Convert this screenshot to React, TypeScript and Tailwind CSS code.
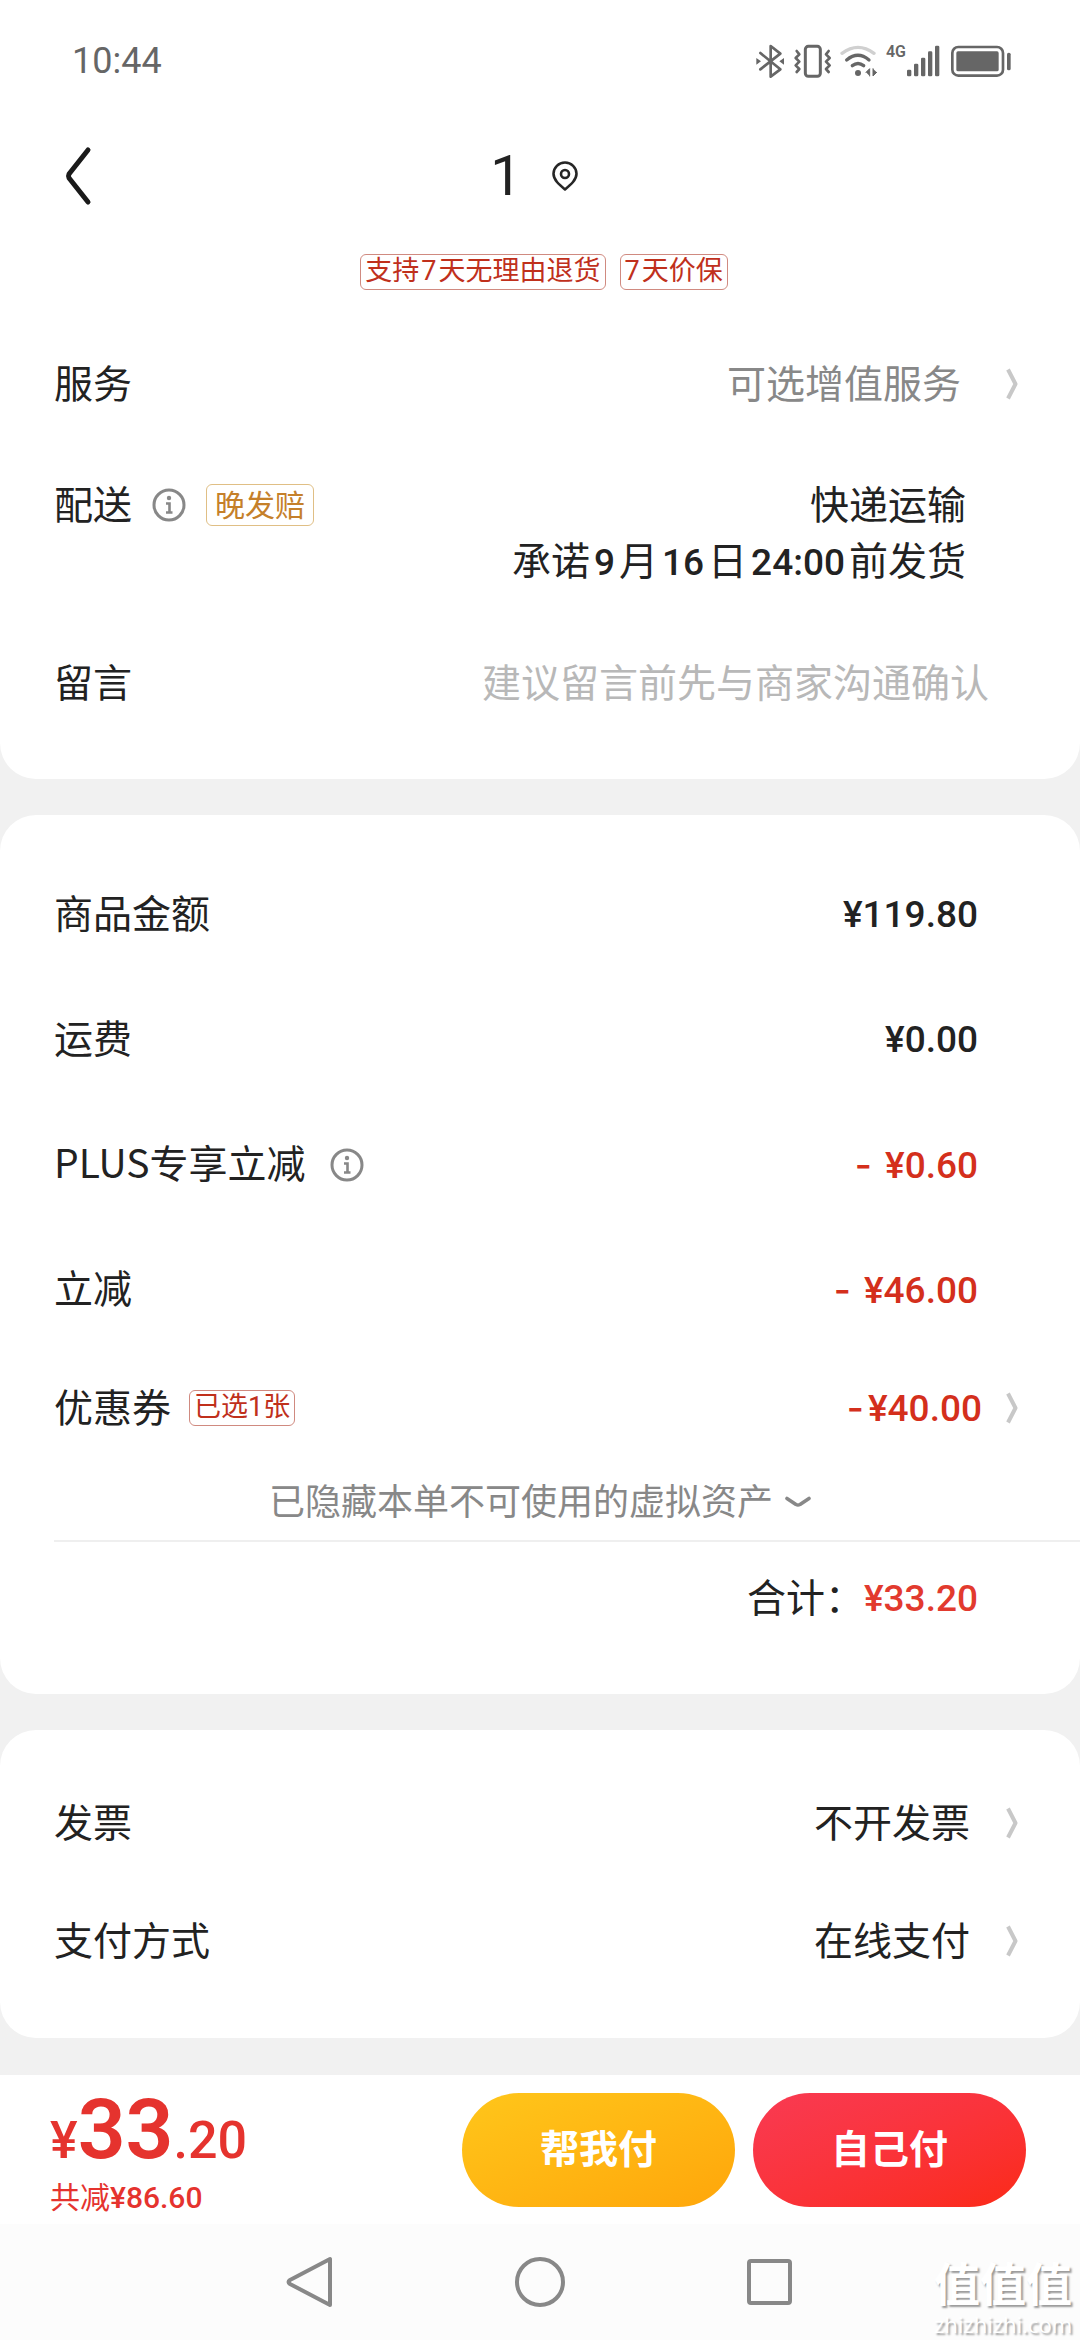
import type { ReactNode } from 'react';

const charges = [
  { label: '商品金额', amount: '¥119.80' },
  { label: '运费', amount: '¥0.00' },
  { label: 'PLUS专享立减', amount: '¥0.60', discount: true, info: true },
  { label: '立减', amount: '¥46.00', discount: true },
];

const settings = [
  { label: '发票', value: '不开发票' },
  { label: '支付方式', value: '在线支付' },
];

function Chevron() {
  return (
    <svg viewBox="0 0 12 32" className="w-3 h-8 shrink-0" fill="none" stroke="#c8c8c8" strokeWidth="4" aria-hidden="true">
      <path d="M2 1.5 L9.5 16 L2 30.5" strokeLinejoin="round" />
    </svg>
  );
}

function InfoIcon() {
  return (
    <svg viewBox="0 0 34 34" className="w-[34px] h-[34px]" fill="none" stroke="#888" aria-hidden="true">
      <circle cx="17" cy="17" r="15" strokeWidth="3" />
      <circle cx="17" cy="10" r="2.2" fill="#888" stroke="none" />
      <path d="M14 15.5 H17.5 V24.5 M14 24.5 H20.5" strokeWidth="2.6" />
    </svg>
  );
}

function Tag({ children }: { children: ReactNode }) {
  return (
    <span className="h-9 px-1 pb-1 flex items-center rounded-md border border-[#d08a80] text-[#c0301c] text-[27px] leading-none">
      <span>{children}</span>
    </span>
  );
}

function Num({ children }: { children: ReactNode }) {
  return <span className="font-[Roboto] font-medium text-[37px] mx-1">{children}</span>;
}

function Minus() {
  return <span className="font-[Inter] mr-1">-</span>;
}

function StatusBar() {
  return (
    <div className="h-[122px] pl-[72px] pr-[68px] flex items-center justify-between text-[#666]">
      <span className="font-[Roboto] text-4xl leading-none">10:44</span>
      <div className="flex items-center">
        <svg viewBox="105 72 90 105" className="w-[30px] h-[35px] mr-2" fill="none" stroke="currentColor" strokeWidth="8" strokeLinejoin="round" strokeLinecap="round">
          <path d="M121 99 L181 148 L152 170 V78 L181 101 L121 148" />
          <path d="M109 114 L123 124 L109 134 Z M192 114 L178 124 L192 134 Z" fill="currentColor" stroke="none" />
        </svg>
        <svg viewBox="220 72 117 105" className="w-[39px] h-[35px] mr-2" fill="none" stroke="currentColor" strokeWidth="8" strokeLinejoin="round" strokeLinecap="round">
          <rect x="257" y="79" width="45" height="90" rx="9" strokeWidth="9" />
          <path d="M231 93 L239 103 L228 114 L239 125 L228 136 L239 147 L231 156" />
          <path d="M327 93 L319 103 L330 114 L319 125 L330 136 L319 147 L327 156" />
        </svg>
        <svg viewBox="366 72 114 105" className="w-[38px] h-[35px] mr-2" fill="none" stroke="currentColor" strokeWidth="10" strokeLinecap="round">
          <path d="M372 100 Q420 64 468 100" stroke="#d0d0d0" />
          <path d="M386 120 Q420 92 453 120" />
          <path d="M403 137 Q420 124 437 137" />
          <circle cx="420" cy="159" r="9" fill="currentColor" stroke="none" />
          <path d="M444 157 L455 146 V168 M465 146 V168 L476 157" fill="currentColor" strokeWidth="3" />
        </svg>
        <span className="font-[Roboto] font-semibold text-base leading-none self-start">4G</span>
        <svg viewBox="552 72 102 105" className="w-[34px] h-[35px] mr-2.5" fill="currentColor">
          <rect x="555" y="149" width="13" height="20" rx="4" />
          <rect x="576" y="131" width="13" height="38" rx="4" />
          <rect x="597" y="113" width="13" height="56" rx="4" />
          <rect x="618" y="94" width="13" height="75" rx="4" />
          <rect x="639" y="77" width="13" height="92" rx="4" />
        </svg>
        <svg viewBox="687 72 186 105" className="w-[62px] h-[35px]" fill="currentColor">
          <rect x="694" y="81" width="152" height="86" rx="18" fill="none" stroke="currentColor" strokeWidth="8" />
          <rect x="706" y="94" width="127" height="60" rx="5" />
          <rect x="858" y="98" width="11" height="53" rx="5" />
        </svg>
      </div>
    </div>
  );
}

function Header() {
  return (
    <header className="h-[108px] pl-12 pr-[60px] grid grid-cols-[1fr_auto_1fr] items-center">
      <button type="button" aria-label="返回" className="w-[60px] h-16 flex items-center justify-center">
        <svg viewBox="0 0 28 60" className="w-7 h-[60px]" fill="none" stroke="#1a1a1a" strokeWidth="5" strokeLinecap="round" strokeLinejoin="round">
          <path d="M24 4 L5 28 Q4 30 5 32 L24 56" />
        </svg>
      </button>
      <h1 className="flex items-center gap-[30px] font-[Roboto] text-[56px] leading-none">
        1
        <svg viewBox="0 0 26 30" className="w-[26px] h-[30px]" fill="none" stroke="#262626" strokeWidth="2.6" strokeLinejoin="round">
          <path d="M13 28.4 C7 23.5 1.5 18.8 1.5 12.8 A11.5 11.3 0 0 1 24.5 12.8 C24.5 18.8 19 23.5 13 28.4 Z" />
          <circle cx="13" cy="13" r="4" />
        </svg>
      </h1>
    </header>
  );
}

function DeliveryCard() {
  return (
    <section className="bg-white rounded-b-[36px] pb-9">
      <StatusBar />
      <Header />
      <div className="mt-6 pl-2 flex justify-center gap-[14px]">
        <Tag>支持<span className="font-[Roboto] mx-0.5">7</span>天无理由退货</Tag>
        <Tag><span className="font-[Roboto] mr-0.5">7</span>天价保</Tag>
      </div>
      <button type="button" className="mt-[34px] w-full h-[120px] pl-[54px] pr-[62px] flex items-center">
        <span className="pb-1.5">服务</span>
        <span className="pb-1.5 ml-auto mr-[45px] text-[#888]">可选增值服务</span>
        <Chevron />
      </button>
      <div className="mt-[33px] pl-[54px] pr-[114px] flex justify-between">
        <div className="h-14 flex items-center">
          <span className="pb-1.5">配送</span>
          <button type="button" aria-label="配送说明" className="ml-5"><InfoIcon /></button>
          <span className="ml-5 h-[42px] px-2 pb-1 flex items-center rounded-md border border-[#e0bf85] text-[#c5802a] text-[30px]">晚发赔</span>
        </div>
        <div className="text-right">
          <p className="h-14 pb-1.5 flex items-center justify-end">快递运输</p>
          <p className="h-14 pb-1.5 flex items-baseline justify-end leading-[50px]">
            承诺<Num>9</Num>月<Num>16</Num>日<Num>24:00</Num>前发货
          </p>
        </div>
      </div>
      <div className="mt-[34px] h-[120px] pl-[54px] pr-[91px] flex items-center">
        <label htmlFor="message" className="pb-1.5">留言</label>
        <input
          id="message"
          type="text"
          placeholder="建议留言前先与商家沟通确认"
          className="pb-1.5 ml-auto flex-1 min-w-0 text-right outline-none placeholder:text-[#b8b8b8]"
        />
      </div>
    </section>
  );
}

function PriceCard() {
  return (
    <section className="mt-9 bg-white rounded-[36px] pt-[37px] pb-10">
      {charges.map((c) => (
        <div key={c.label} className="h-[125px] pl-[54px] pr-[102px] flex items-center">
          <span className="pb-1.5">{c.label}</span>
          {c.info && <button type="button" aria-label="PLUS说明" className="ml-6"><InfoIcon /></button>}
          <span className={`ml-auto font-[Roboto] font-medium text-[37px] ${c.discount ? 'text-[#d42f1c]' : ''}`}>
            {c.discount && <><Minus />{' '}</>}
            {c.amount}
          </span>
        </div>
      ))}
      <button type="button" className="w-full h-28 pl-[54px] pr-[62px] flex items-center">
        <span className="pb-1.5 mr-[18px]">优惠券</span>
        <Tag>已选<span className="font-[Roboto]">1</span>张</Tag>
        <span className="ml-auto mr-6 font-[Roboto] font-medium text-[37px] text-[#d42f1c]"><Minus />¥40.00</span>
        <Chevron />
      </button>
      <div className="ml-[54px] h-[78px] pr-[54px] border-b-2 border-[#efefef] flex justify-center">
        <button type="button" className="flex items-center gap-3 text-4xl text-[#888]">
          <span className="pb-1.5 leading-none">已隐藏本单不可使用的虚拟资产</span>
          <svg viewBox="0 0 26 12" className="w-[26px] h-3" fill="none" stroke="#888" strokeWidth="3.6" strokeLinecap="round" strokeLinejoin="round">
            <path d="M2 2.5 L11 8.5 Q13 9.5 15 8.5 L24 2.5" />
          </svg>
        </button>
      </div>
      <div className="h-28 pr-[102px] flex items-center justify-end">
        <span className="pb-1.5">合计：</span>
        <span className="font-[Roboto] font-medium text-[37px] text-[#e23a2e]">¥33.20</span>
      </div>
    </section>
  );
}

function SettingsCard() {
  return (
    <section className="mt-9 bg-white rounded-[36px] pt-[34px] pb-[38px]">
      {settings.map((s) => (
        <button key={s.label} type="button" className="w-full h-[118px] pl-[54px] pr-[62px] flex items-center">
          <span className="pb-1.5">{s.label}</span>
          <span className="pb-1.5 ml-auto mr-9">{s.value}</span>
          <Chevron />
        </button>
      ))}
    </section>
  );
}

function PayBar() {
  return (
    <footer className="mt-[37px] h-[149px] bg-white pl-[50px] pr-[54px] flex items-center">
      <div className="pt-1.5 text-[#e5332e]">
        <p className="font-[Roboto] font-medium text-[52px] leading-none">
          ¥<span className="text-[84px] font-semibold leading-[74px]">33</span>.20
        </p>
        <p className="mt-3 text-[30px] leading-8">
          共减<span className="font-[Roboto] font-medium leading-none">¥86.60</span>
        </p>
      </div>
      <div className="ml-auto flex gap-[18px] font-bold text-white">
        <button type="button" className="w-[273px] h-[114px] pb-1.5 rounded-full bg-linear-to-br from-[#ffc61a] to-[#ffa60a]">帮我付</button>
        <button type="button" className="w-[273px] h-[114px] pb-1.5 rounded-full bg-linear-to-br from-[#f93a52] to-[#fb2a14]">自己付</button>
      </div>
    </footer>
  );
}

function SystemNav() {
  return (
    <nav className="relative h-[116px] bg-[#fcfcfc] flex items-center justify-center gap-[176px]">
      <button type="button" aria-label="后退">
        <svg viewBox="0 0 54 54" className="w-[54px] h-[54px]" fill="none" stroke="#888" strokeWidth="4" strokeLinejoin="round">
          <path d="M47 4 V50 L7 29 Q4 27 7 25 Z" />
        </svg>
      </button>
      <button type="button" aria-label="主页">
        <svg viewBox="0 0 54 54" className="w-[54px] h-[54px]" fill="none" stroke="#888" strokeWidth="4">
          <circle cx="27" cy="27" r="23" />
        </svg>
      </button>
      <button type="button" aria-label="最近任务">
        <svg viewBox="0 0 54 54" className="w-[54px] h-[54px]" fill="none" stroke="#888" strokeWidth="4">
          <rect x="6" y="6" width="41" height="42" rx="2" />
        </svg>
      </button>
      <div className="absolute right-2 bottom-1 flex flex-col items-center text-white [text-shadow:2px_2px_2px_#999]">
        <span className="text-[46px] leading-[62px] font-bold">值值值</span>
        <span className="font-['Open_Sans'] text-[22px] leading-6">zhizhizhi.com</span>
      </div>
    </nav>
  );
}

export default function App() {
  return (
    <main className="min-h-screen flex flex-col bg-[#f1f1f1] font-['Noto_Sans_CJK_SC',sans-serif] text-[39px] leading-none text-[#222]">
      <DeliveryCard />
      <PriceCard />
      <SettingsCard />
      <PayBar />
      <SystemNav />
    </main>
  );
}
